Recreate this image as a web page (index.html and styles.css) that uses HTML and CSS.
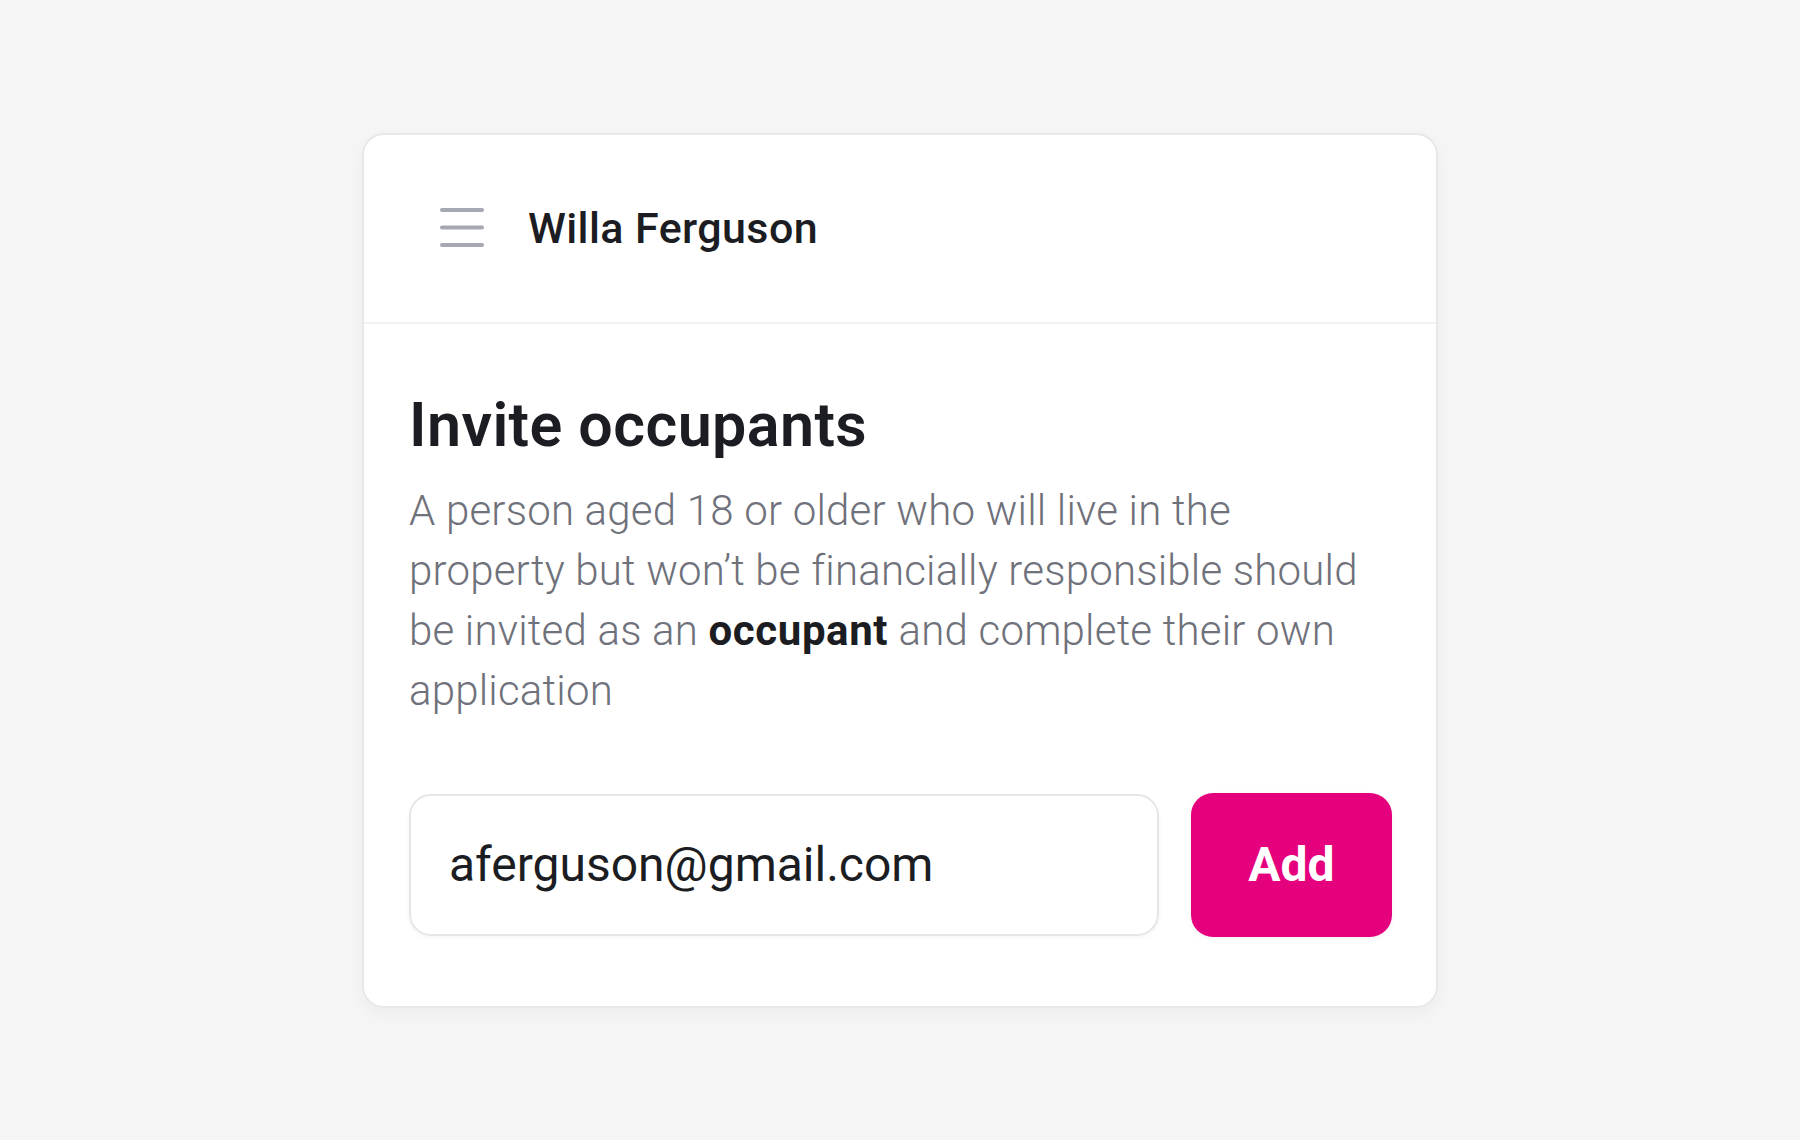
FILE: index.html
```html
<!DOCTYPE html>
<html lang="en">
<head>
<meta charset="utf-8">
<title>Invite occupants</title>
<link rel="stylesheet" href="styles.css">
</head>
<body>
  <div class="card">
    <header class="card-header">
      <button class="menu-btn" aria-label="Menu">
        <svg width="44" height="40" viewBox="0 0 44 40" aria-hidden="true">
          <line x1="2" y1="2" x2="42" y2="2"/>
          <line x1="2" y1="19.5" x2="42" y2="19.5"/>
          <line x1="2" y1="37" x2="42" y2="37"/>
        </svg>
      </button>
      <span class="user-name">Willa Ferguson</span>
    </header>
    <section class="card-body">
      <h1 class="title">Invite occupants</h1>
      <p class="desc">A person aged 18 or older who will live in the property but won’t be financially responsible should be invited as an <strong>occupant</strong> and complete their own application</p>
      <form class="invite-row">
        <input class="email-input" type="email" value="aferguson@gmail.com">
        <button class="add-btn" type="button">Add</button>
      </form>
    </section>
  </div>
</body>
</html>
```

FILE: styles.css
```css
* { box-sizing: border-box; }

html, body {
  margin: 0;
  padding: 0;
}

body {
  background: #f5f5f5;
  min-height: 100vh;
  display: flex;
  align-items: center;
  justify-content: center;
  font-family: Roboto, "Liberation Sans", sans-serif;
}

.card {
  width: 1076px;
  background: #ffffff;
  border: 2px solid #e8e8e8;
  border-radius: 22px;
  box-shadow: 0 6px 16px rgba(0, 0, 0, 0.035);
}

.card-header {
  height: 189px;
  display: flex;
  align-items: center;
  padding-left: 76px;
  border-bottom: 2px solid #f1f1f1;
}

.menu-btn {
  background: none;
  border: 0;
  padding: 0;
  margin: 0;
  width: 44px;
  height: 40px;
  display: flex;
  cursor: pointer;
}

.menu-btn svg line {
  stroke: #a6a8b1;
  stroke-width: 4;
  stroke-linecap: round;
}

.user-name {
  margin-left: 44px;
  font-size: 43px;
  font-weight: 500;
  letter-spacing: 0.4px;
  color: #1c1d22;
  line-height: 1;
}

.card-body {
  padding: 65px 44px 69px 45px;
}

.title {
  margin: 0;
  font-size: 61px;
  line-height: 72px;
  font-weight: 600;
  letter-spacing: 0.4px;
  color: #1c1d22;
}

.desc {
  margin: 20px 0 0;
  font-size: 42px;
  line-height: 60px;
  font-weight: 300;
  letter-spacing: 0.2px;
  color: #6f717b;
}

.desc strong {
  font-weight: 700;
  letter-spacing: 0.6px;
  color: #1c1d22;
}

.invite-row {
  margin: 72px 0 0;
  display: flex;
  align-items: center;
  gap: 32px;
}

.email-input {
  flex: 1;
  min-width: 0;
  height: 142px;
  border: 2px solid #e6e6e6;
  border-radius: 22px;
  padding: 0 38px;
  font-family: Roboto, "Liberation Sans", sans-serif;
  font-size: 48px;
  font-weight: 400;
  color: #1c1d22;
  background: #fff;
  box-shadow: 0 2px 4px rgba(0, 0, 0, 0.04);
  outline: none;
}

.add-btn {
  width: 201px;
  height: 144px;
  border: 0;
  border-radius: 22px;
  background: #e5007d;
  color: #ffffff;
  font-family: Roboto, "Liberation Sans", sans-serif;
  font-size: 48px;
  font-weight: 700;
  box-shadow: 0 2px 6px rgba(0, 0, 0, 0.05);
  cursor: pointer;
}
```
